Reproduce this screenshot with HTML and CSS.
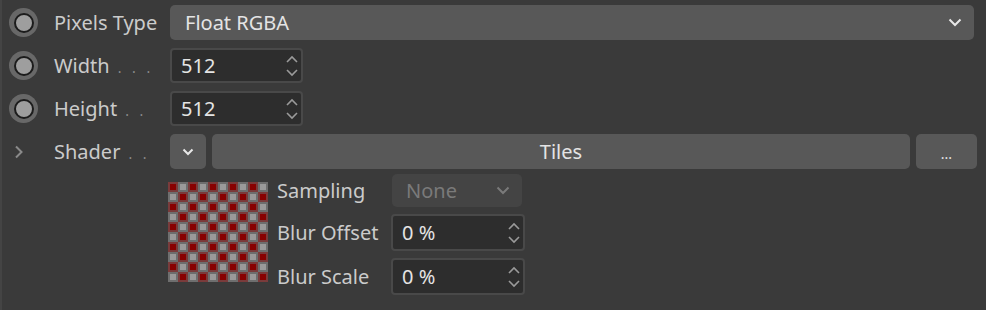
FILE: index.html
```html
<!DOCTYPE html>
<html lang="en">
<head>
    <meta charset="UTF-8" />
    <title>Noise Attributes</title>
    <link rel="stylesheet" href="styles.css">
</head>
<body>
    <div class="panel">
        <div class="row">
            <span class="radio"></span>
            <span class="label">Pixels Type</span>
            <div class="select wide">
                <span>Float RGBA</span>
                <svg class="chev" width="14" height="9" viewBox="0 0 14 9"><path d="M1.5 1.5 L7 7 L12.5 1.5" /></svg>
            </div>
        </div>
        <div class="row">
            <span class="radio"></span>
            <span class="label">Width<span class="dots">. . .</span></span>
            <div class="number">
                <span>512</span>
                <svg class="spin" width="14" height="24" viewBox="0 0 14 24"><path d="M2 8 L7 3 L12 8" /><path d="M2 16 L7 21 L12 16" /></svg>
            </div>
        </div>
        <div class="row">
            <span class="radio"></span>
            <span class="label">Height<span class="dots">. .</span></span>
            <div class="number">
                <span>512</span>
                <svg class="spin" width="14" height="24" viewBox="0 0 14 24"><path d="M2 8 L7 3 L12 8" /><path d="M2 16 L7 21 L12 16" /></svg>
            </div>
        </div>
        <div class="row">
            <span class="expand">
                <svg width="10" height="14" viewBox="0 0 10 14"><path d="M2 1.5 L7.5 7 L2 12.5" /></svg>
            </span>
            <span class="label">Shader<span class="dots">. .</span></span>
            <div class="shader">
                <button class="btn small">
                    <svg class="chev" width="12" height="8" viewBox="0 0 12 8"><path d="M1.5 1.5 L6 6 L10.5 1.5" /></svg>
                </button>
                <button class="btn grow">Tiles</button>
                <button class="btn more">...</button>
            </div>
        </div>
        <div class="sub">
            <svg class="preview" width="100" height="100" viewBox="0 0 100 100">
                <defs>
                    <pattern id="tiles" width="20" height="20" patternUnits="userSpaceOnUse">
                        <rect x="0" y="0" width="10" height="10" fill="#7a3b3b" />
                        <rect x="2" y="2" width="6" height="6" fill="#880000" />
                        <rect x="10" y="0" width="10" height="10" fill="#6e6e6e" />
                        <rect x="12" y="2" width="6" height="6" fill="#9a9a9a" />
                        <rect x="0" y="10" width="10" height="10" fill="#6e6e6e" />
                        <rect x="2" y="12" width="6" height="6" fill="#9a9a9a" />
                        <rect x="10" y="10" width="10" height="10" fill="#7a3b3b" />
                        <rect x="12" y="12" width="6" height="6" fill="#880000" />
                    </pattern>
                </defs>
                <rect width="100" height="100" fill="url(#tiles)" />
            </svg>
            <div class="sub-rows">
                <div class="sub-row">
                    <span class="sub-label">Sampling</span>
                    <div class="select disabled">
                        <span>None</span>
                        <svg class="chev" width="14" height="9" viewBox="0 0 14 9"><path d="M1.5 1.5 L7 7 L12.5 1.5" /></svg>
                    </div>
                </div>
                <div class="sub-row">
                    <span class="sub-label">Blur Offset</span>
                    <div class="number">
                        <span>0 %</span>
                        <svg class="spin" width="14" height="24" viewBox="0 0 14 24"><path d="M2 8 L7 3 L12 8" /><path d="M2 16 L7 21 L12 16" /></svg>
                    </div>
                </div>
                <div class="sub-row">
                    <span class="sub-label">Blur Scale</span>
                    <div class="number">
                        <span>0 %</span>
                        <svg class="spin" width="14" height="24" viewBox="0 0 14 24"><path d="M2 8 L7 3 L12 8" /><path d="M2 16 L7 21 L12 16" /></svg>
                    </div>
                </div>
            </div>
        </div>
    </div>
</body>
</html>
```

FILE: styles.css
```css
body {
    margin: 0;
    background: #3a3a3a;
    font-family: "Noto Sans", "Open Sans", sans-serif;
    font-size: 20px;
    color: #cbcbcb;
}
.panel {
    border-left: 2px solid #444444;
    height: 310px;
    box-sizing: border-box;
    padding: 5px 12px 0 0;
}
.row {
    display: flex;
    align-items: center;
    height: 35px;
    margin-bottom: 8px;
}
.radio {
    width: 29px;
    height: 29px;
    margin-left: 7px;
    border-radius: 50%;
    background: #686868;
    display: flex;
    align-items: center;
    justify-content: center;
}
.radio::after {
    content: "";
    width: 16px;
    height: 16px;
    border-radius: 50%;
    background: #9e9e9e;
    border: 2px solid #1c1c1c;
}
.expand {
    width: 29px;
    margin-left: 7px;
    padding-left: 5px;
    box-sizing: border-box;
    display: flex;
}
.expand path {
    fill: none;
    stroke: #8a8a8a;
    stroke-width: 2;
}
.label {
    width: 132px;
    padding-left: 16px;
    box-sizing: border-box;
    white-space: nowrap;
}
.dots {
    color: #8c8c8c;
    font-size: 14px;
    margin-left: 8px;
    letter-spacing: 3.5px;
}
.select {
    display: flex;
    align-items: center;
    justify-content: space-between;
    height: 35px;
    background: #585858;
    border-radius: 5px;
    padding: 0 12px 0 15px;
    box-sizing: border-box;
    color: #e4e4e4;
}
.select.wide {
    flex: 1;
}
.chev path {
    fill: none;
    stroke: #e8e8e8;
    stroke-width: 2;
}
.number {
    display: flex;
    align-items: center;
    justify-content: space-between;
    width: 133px;
    height: 35px;
    background: #2d2d2d;
    border: 2px solid #494949;
    border-radius: 4px;
    padding: 0 2px 0 9px;
    box-sizing: border-box;
    color: #e4e4e4;
}
.spin path {
    fill: none;
    stroke: #9a9a9a;
    stroke-width: 1.6;
}
.shader {
    flex: 1;
    display: flex;
    gap: 6px;
    margin-right: -3px;
}
.btn {
    height: 35px;
    background: #585858;
    border: none;
    border-radius: 5px;
    font-family: inherit;
    font-size: 20px;
    color: #e4e4e4;
    padding: 0;
}
.btn.small {
    width: 36px;
    display: flex;
    align-items: center;
    justify-content: center;
}
.btn.grow {
    flex: 1;
}
.btn.more {
    width: 61px;
    font-size: 14px;
    padding-top: 4px;
}
.sub {
    display: flex;
    margin-left: 166px;
    margin-top: -3px;
}
.preview {
    margin-top: 8px;
}
.sub-rows {
    display: flex;
    flex-direction: column;
    gap: 7px;
    margin-left: 9px;
}
.sub-row {
    display: flex;
    align-items: center;
}
.sub-label {
    width: 114px;
}
.select.disabled {
    width: 130px;
    height: 33px;
    margin-left: 1px;
    background: #444444;
    color: #7a7a7a;
    padding-left: 14px;
}
.select.disabled .chev path {
    stroke: #7a7a7a;
}
.sub-row .number {
    width: 134px;
    height: 37px;
}
```
